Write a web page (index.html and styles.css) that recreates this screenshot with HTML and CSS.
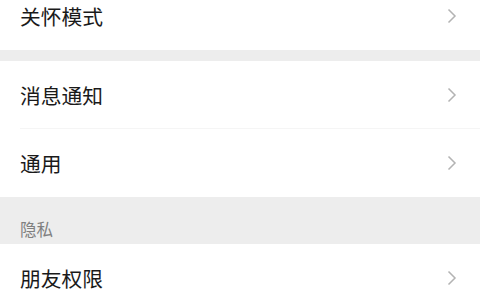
FILE: index.html
```html
<!DOCTYPE html>
<html lang="zh-CN">
<head>
    <meta charset="UTF-8">
    <meta name="viewport" content="width=device-width, initial-scale=1.0">
    <title>设置</title>
    <link rel="stylesheet" href="styles.css">
</head>
<body>
    <div class="settings">
        <div class="group group-first">
            <div class="cell">
                <div class="cell-inner">
                    <span class="cell-title">关怀模式</span>
                    <svg class="arrow" width="10" height="16" viewBox="0 0 10 16"><polyline points="1.5,1.5 8,8 1.5,14.5"/></svg>
                </div>
            </div>
        </div>

        <div class="group">
            <div class="cell">
                <div class="cell-inner">
                    <span class="cell-title">消息通知</span>
                    <svg class="arrow" width="10" height="16" viewBox="0 0 10 16"><polyline points="1.5,1.5 8,8 1.5,14.5"/></svg>
                </div>
            </div>
            <div class="cell">
                <div class="cell-inner">
                    <span class="cell-title">通用</span>
                    <svg class="arrow" width="10" height="16" viewBox="0 0 10 16"><polyline points="1.5,1.5 8,8 1.5,14.5"/></svg>
                </div>
            </div>
        </div>

        <div class="group-label">隐私</div>

        <div class="group group-flush">
            <div class="cell">
                <div class="cell-inner">
                    <span class="cell-title">朋友权限</span>
                    <svg class="arrow" width="10" height="16" viewBox="0 0 10 16"><polyline points="1.5,1.5 8,8 1.5,14.5"/></svg>
                </div>
            </div>
        </div>
    </div>
</body>
</html>
```

FILE: styles.css
```css
body {
    font-family: "Noto Sans CJK SC", "Noto Sans", sans-serif;
    margin: 0;
    background: #ededed;
    overflow: hidden;
}
.settings {
    width: 480px;
}
.group {
    background: white;
    margin-top: 11px;
}
.group-first {
    margin-top: -18px;
}
.group-flush {
    margin-top: 0;
}
.cell {
    padding-left: 20px;
}
.cell-inner {
    display: flex;
    align-items: center;
    justify-content: space-between;
    height: 67px;
    padding-right: 23px;
}
.group-first .cell-inner {
    height: 68px;
}
.cell + .cell .cell-inner {
    height: 69px;
    border-top: 1px solid #f5f5f5;
    box-sizing: border-box;
}
.group-flush .cell-inner {
    height: 68px;
}
.cell-title {
    font-size: 20.75px;
    line-height: 24px;
    color: #1a1a1a;
}
.arrow polyline {
    fill: none;
    stroke: #b3b3b3;
    stroke-width: 1.5;
}
.group-label {
    height: 47px;
    box-sizing: border-box;
    padding: 22px 0 0 20px;
    font-size: 16.5px;
    line-height: 20px;
    color: #808080;
}
```
